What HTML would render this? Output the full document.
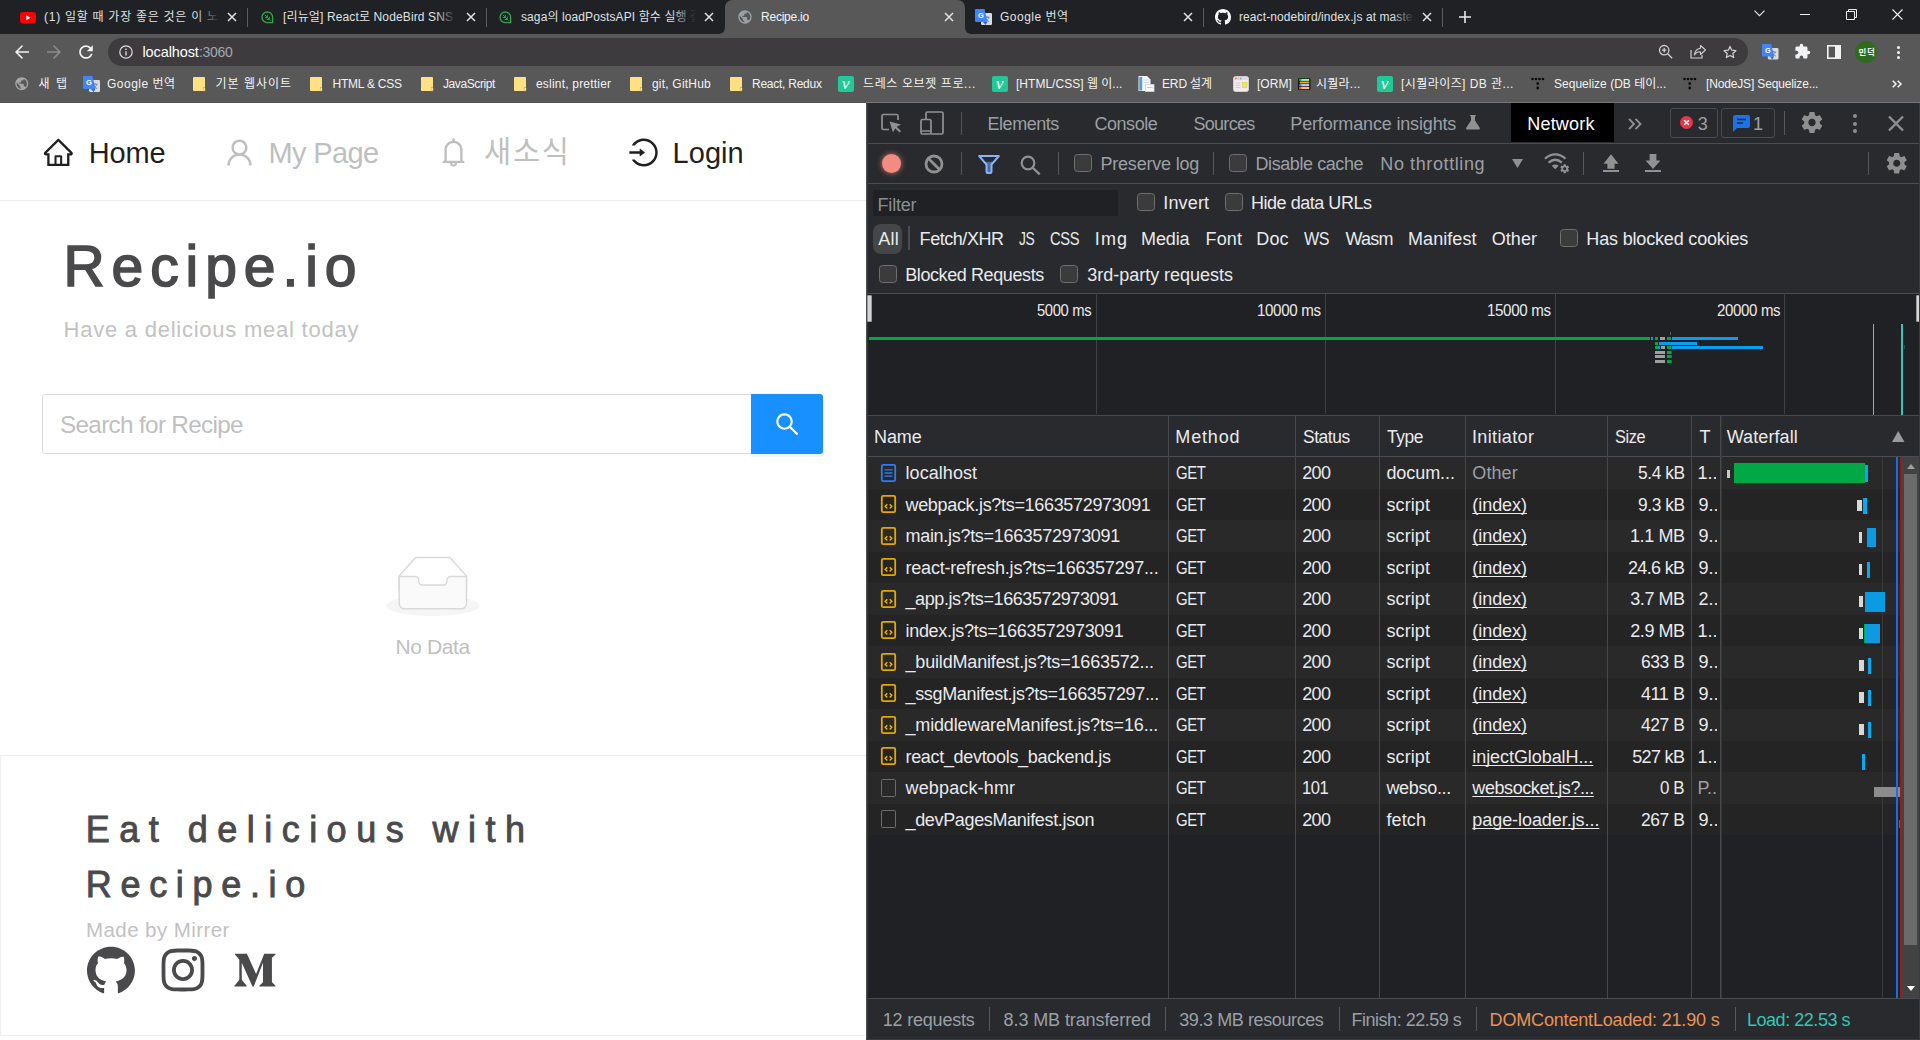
<!DOCTYPE html>
<html lang="ko">
<head>
<meta charset="utf-8">
<title>Recipe.io</title>
<style>
html,body{margin:0;padding:0;}
body{width:1920px;height:1040px;overflow:hidden;position:relative;background:#fff;font-family:"Liberation Sans","Noto Sans CJK KR",sans-serif;}
.a{position:absolute;box-sizing:border-box;}
.t{position:absolute;white-space:pre;margin:0;padding:0;font-weight:400;}
svg{display:block;overflow:visible;}
</style>
</head>
<body>
<header id="chrome">
<div class="a" style="left:0px;top:0px;width:1920px;height:34px;background:#202124;"></div>
<div class="a" style="left:0px;top:34px;width:1920px;height:68px;background:#585858;"></div>
<div class="a" style="left:0px;top:102px;width:866px;height:1px;background:#505050;"></div>
<div class="a" style="left:866px;top:102px;width:1054px;height:1px;background:#777577;"></div>
<svg class="a" style="left:717px;top:0" width="256" height="34" viewBox="0 0 256 34"><path d="M0 34 C6 34 8 32 8 26 L8 8 C8 3 11 0 16 0 L240 0 C245 0 248 3 248 8 L248 26 C248 32 250 34 256 34 Z" fill="#585858"/></svg>
<svg class="a" style="left:20px;top:11.5px" width="16" height="11.5" viewBox="0 0 16 11.5"><rect width="16" height="11.5" rx="3" fill="#f00"/><path d="M6.3 3.2L10.6 5.75L6.3 8.3Z" fill="#fff"/></svg>
<span class="t" style="top:8px;font-size:12px;line-height:18px;color:#dfe1e5;left:44px;letter-spacing:0.73px;">(1) 일할 때 가장 좋은 것은 이 노</span>
<div class="a" style="left:196px;top:4px;width:24px;height:26px;background:linear-gradient(to right,rgba(0,0,0,0),#202124);"></div>
<svg class="a" style="left:227px;top:12px" width="10" height="10" viewBox="0 0 10 10"><path d="M1 1L9 9 M9 1L1 9" stroke="#e3e3e3" stroke-width="1.5" fill="none"/></svg>
<div class="a" style="left:247px;top:8px;width:1px;height:19px;background:#5a5c60;"></div>
<svg class="a" style="left:260.5px;top:10.5px" width="13" height="13" viewBox="0 0 13 13"><path d="M6.300 1A5.300 5.300 0 106.300 11.600H11.600V6.300A5.300 5.300 0 006.300 1z" fill="none" stroke="#2fa24f" stroke-width="1.400"/><path d="M3.800 3.800L9.600 9.600M6.300 4v2.600H3.900M8.300 5.800v2.700H5.700" stroke="#2fa24f" stroke-width="1" fill="none"/></svg>
<span class="t" style="top:8px;font-size:12px;line-height:18px;color:#dfe1e5;left:283px;letter-spacing:0.13px;">[리뉴얼] React로 NodeBird SNS</span>
<div class="a" style="left:436px;top:4px;width:20px;height:26px;background:linear-gradient(to right,rgba(0,0,0,0),#202124);"></div>
<svg class="a" style="left:465.5px;top:12px" width="10" height="10" viewBox="0 0 10 10"><path d="M1 1L9 9 M9 1L1 9" stroke="#e3e3e3" stroke-width="1.5" fill="none"/></svg>
<div class="a" style="left:486px;top:8px;width:1px;height:19px;background:#5a5c60;"></div>
<svg class="a" style="left:498.5px;top:10.5px" width="13" height="13" viewBox="0 0 13 13"><path d="M6.300 1A5.300 5.300 0 106.300 11.600H11.600V6.300A5.300 5.300 0 006.300 1z" fill="none" stroke="#2fa24f" stroke-width="1.400"/><path d="M3.800 3.800L9.600 9.600M6.300 4v2.600H3.900M8.300 5.800v2.700H5.700" stroke="#2fa24f" stroke-width="1" fill="none"/></svg>
<span class="t" style="top:8px;font-size:12px;line-height:18px;color:#dfe1e5;left:521px;letter-spacing:0.1px;">saga의 loadPostsAPI 함수 실행 결</span>
<div class="a" style="left:672px;top:4px;width:24px;height:26px;background:linear-gradient(to right,rgba(0,0,0,0),#202124);"></div>
<div class="a" style="left:696px;top:4px;width:20px;height:26px;background:#202124;"></div>
<svg class="a" style="left:704px;top:12px" width="10" height="10" viewBox="0 0 10 10"><path d="M1 1L9 9 M9 1L1 9" stroke="#e3e3e3" stroke-width="1.5" fill="none"/></svg>
<svg class="a" style="left:737px;top:9px" width="16" height="16" viewBox="0 0 24 24"><path fill="#9aa0a6" d="M12 2C6.48 2 2 6.48 2 12s4.48 10 10 10 10-4.48 10-10S17.52 2 12 2zm-1 17.930c-3.950-.490-7-3.850-7-7.930 0-.620.080-1.210.210-1.790L9 15v1c0 1.100.9 2 2 2v1.930zm6.900-2.540c-.26-.810-1-1.390-1.900-1.390h-1v-3c0-.550-.450-1-1-1H8v-2h2c.550 0 1-.450 1-1V7h2c1.100 0 2-.9 2-2v-.410c2.930 1.190 5 4.060 5 7.410 0 2.080-.8 3.970-2.100 5.390z"/></svg>
<span class="t" style="top:8px;font-size:12px;line-height:18px;color:#f1f3f4;left:761px;letter-spacing:-0.23px;">Recipe.io</span>
<svg class="a" style="left:944px;top:12px" width="10" height="10" viewBox="0 0 10 10"><path d="M1 1L9 9 M9 1L1 9" stroke="#e3e3e3" stroke-width="1.5" fill="none"/></svg>
<svg class="a" style="left:975px;top:8.5px" width="17" height="17" viewBox="0 0 17 17"><rect x="6" y="4" width="11" height="12" rx="1.2" fill="#dadce0"/><path d="M9.500 8.200h5M12 7v1.200M10.200 12.500c2-1 3.200-2.500 3.600-4.300M10.600 9.500c.8 1.500 2 2.500 3.600 3" stroke="#5f7fb5" stroke-width=".9" fill="none"/><path d="M1.200 0h8.300L12.500 13H1.200C.5 13 0 12.500 0 11.800V1.200C0 .5.500 0 1.200 0z" fill="#4285f4"/><path d="M8 13l2.500 3 2-3z" fill="#3367d6"/><text x="3" y="9.300" font-family="Liberation Sans,sans-serif" font-size="7.500" font-weight="700" fill="#fff">G</text></svg>
<span class="t" style="top:8px;font-size:12px;line-height:18px;color:#dfe1e5;left:1000px;letter-spacing:0.49px;">Google 번역</span>
<svg class="a" style="left:1182.5px;top:12px" width="10" height="10" viewBox="0 0 10 10"><path d="M1 1L9 9 M9 1L1 9" stroke="#e3e3e3" stroke-width="1.5" fill="none"/></svg>
<div class="a" style="left:1203px;top:8px;width:1px;height:19px;background:#5a5c60;"></div>
<svg class="a" style="left:1214.500px;top:9px" width="16" height="16" viewBox="0 0 16 16"><path fill="#fff" d="M8 0C3.580 0 0 3.580 0 8c0 3.540 2.290 6.530 5.470 7.590.4.070.550-.170.550-.380 0-.190-.010-.820-.010-1.490-2.010.370-2.530-.490-2.690-.940-.090-.230-.480-.940-.820-1.130-.280-.150-.680-.520-.010-.530.630-.010 1.080.580 1.230.820.720 1.210 1.870.870 2.330.660.070-.520.280-.870.510-1.070-1.780-.2-3.640-.890-3.640-3.950 0-.870.310-1.590.820-2.150-.080-.2-.360-1.020.080-2.120 0 0 .670-.210 2.200.820.640-.180 1.320-.270 2-.270.680 0 1.360.090 2 .270 1.530-1.040 2.200-.820 2.200-.820.440 1.100.160 1.920.080 2.120.510.560.820 1.270.820 2.150 0 3.070-1.870 3.750-3.650 3.950.290.250.540.730.540 1.480 0 1.070-.010 1.930-.010 2.200 0 .210.150.460.550.380A8.013 8.013 0 0016 8c0-4.420-3.580-8-8-8z"/></svg>
<span class="t" style="top:8px;font-size:12px;line-height:18px;color:#dfe1e5;left:1239px;letter-spacing:0.09px;">react-nodebird/index.js at maste</span>
<div class="a" style="left:1392px;top:4px;width:22px;height:26px;background:linear-gradient(to right,rgba(0,0,0,0),#202124);"></div>
<svg class="a" style="left:1422px;top:12px" width="10" height="10" viewBox="0 0 10 10"><path d="M1 1L9 9 M9 1L1 9" stroke="#e3e3e3" stroke-width="1.5" fill="none"/></svg>
<div class="a" style="left:1442px;top:8px;width:1px;height:19px;background:#5a5c60;"></div>
<svg class="a" style="left:1459px;top:11px" width="12" height="12" viewBox="0 0 12 12"><path d="M6 0v12M0 6h12" stroke="#e8eaed" stroke-width="1.600"/></svg>
<svg class="a" style="left:1754px;top:10px" width="11" height="7" viewBox="0 0 11 7"><path d="M.5.700L5.500 5.700 10.500.700" stroke="#e8eaed" stroke-width="1.100" fill="none"/></svg>
<div class="a" style="left:1800px;top:14px;width:10px;height:1px;background:#f1f1f1;"></div>
<svg class="a" style="left:1846px;top:9px" width="11" height="11" viewBox="0 0 11 11"><path d="M.5 2.500h8v8h-8zM2.500 2.500v-2h8v8h-2" stroke="#f1f1f1" stroke-width="1" fill="none"/></svg>
<svg class="a" style="left:1892px;top:9px" width="11" height="11" viewBox="0 0 11 11"><path d="M.5.500l10 10M10.500.500l-10 10" stroke="#f1f1f1" stroke-width="1.100" fill="none"/></svg>
<svg class="a" style="left:14px;top:44px" width="16" height="16" viewBox="0 0 16 16"><path d="M15 7.200H3.900l5-5L8 1 1 8l7 7 .9-1.200-5-5H15z" fill="#f1f3f4"/></svg>
<svg class="a" style="left:46px;top:44px" width="16" height="16" viewBox="0 0 16 16"><path d="M1 7.200h11.100l-5-5L8 1l7 7-7 7-.9-1.200 5-5H1z" fill="#8b8b8b"/></svg>
<svg class="a" style="left:78px;top:44px" width="16" height="16" viewBox="0 0 16 16"><path d="M13.650 2.350A7.958 7.958 0 008 0C3.580 0 .01 3.580.01 8S3.580 16 8 16c3.730 0 6.840-2.550 7.730-6h-2.080A5.990 5.990 0 018 14c-3.310 0-6-2.690-6-6s2.690-6 6-6c1.660 0 3.140.690 4.220 1.780L9 7h7V0l-2.350 2.350z" fill="#f1f3f4" transform="translate(1.200 1.200) scale(.85)"/></svg>
<div class="a" style="left:108px;top:38px;width:1640px;height:28px;background:#3d3b3e;border-radius:14px;"></div>
<svg class="a" style="left:118.500px;top:45px" width="14" height="14" viewBox="0 0 14 14"><circle cx="7" cy="7" r="6.200" fill="none" stroke="#e0e0e0" stroke-width="1.200"/><path d="M7 6.200v4.200M7 3.600v1.400" stroke="#e0e0e0" stroke-width="1.300"/></svg>
<span class="t" style="top:42px;font-size:14.5px;line-height:20px;color:#ffffff;left:142.5px;letter-spacing:-0.11px;">localhost</span>
<span class="t" style="top:42px;font-size:14.5px;line-height:20px;color:#a3a9b0;left:198.83px;letter-spacing:-0.35px;transform:scaleX(0.9668);transform-origin:0 0;">:3060</span>
<svg class="a" style="left:1658px;top:44px" width="16" height="16" viewBox="0 0 16 16"><circle cx="6.200" cy="6.200" r="4.700" fill="none" stroke="#d0d0d0" stroke-width="1.300"/><path d="M9.700 9.700L14.200 14.200M4 6.200h4.400M6.200 4v4.400" stroke="#d0d0d0" stroke-width="1.300" fill="none"/></svg>
<svg class="a" style="left:1690px;top:44px" width="17" height="16" viewBox="0 0 17 16"><path d="M1 6v8h11v-3" stroke="#d0d0d0" stroke-width="1.200" fill="none"/><path d="M10.500 1.500L15.500 6l-5 4.500V7.800C7.500 7.800 5.500 9 4.300 11 4.800 7.500 6.800 4.800 10.500 4.200z" stroke="#d0d0d0" stroke-width="1.100" fill="none" stroke-linejoin="round"/></svg>
<svg class="a" style="left:1722px;top:44px" width="16" height="16" viewBox="0 0 24 24"><path d="M12 3.600l2.600 5.700 6.200.7-4.600 4.200 1.300 6.100L12 17.200 6.500 20.300l1.300-6.100L3.200 10l6.200-.7z" stroke="#d0d0d0" stroke-width="1.900" fill="none" stroke-linejoin="round"/></svg>
<svg class="a" style="left:1762px;top:44px" width="16.5" height="16.5" viewBox="0 0 17 17"><rect x="6" y="4" width="11" height="12" rx="1.2" fill="#dadce0"/><path d="M9.500 8.200h5M12 7v1.200M10.200 12.500c2-1 3.200-2.500 3.600-4.300M10.600 9.500c.8 1.500 2 2.500 3.600 3" stroke="#5f7fb5" stroke-width=".9" fill="none"/><path d="M1.200 0h8.300L12.500 13H1.200C.5 13 0 12.500 0 11.800V1.200C0 .5.500 0 1.200 0z" fill="#4285f4"/><path d="M8 13l2.500 3 2-3z" fill="#3367d6"/><text x="3" y="9.300" font-family="Liberation Sans,sans-serif" font-size="7.500" font-weight="700" fill="#fff">G</text></svg>
<svg class="a" style="left:1794px;top:43px" width="17" height="17" viewBox="0 0 24 24"><path fill="#f1f3f4" d="M20.500 11H19V7c0-1.100-.9-2-2-2h-4V3.500a2.500 2.500 0 00-5 0V5H4c-1.100 0-1.990.9-1.990 2v3.800H3.500c1.490 0 2.700 1.210 2.700 2.700s-1.210 2.700-2.700 2.700H2V20c0 1.100.9 2 2 2h3.800v-1.500c0-1.490 1.210-2.700 2.700-2.700 1.490 0 2.700 1.210 2.700 2.700V22H17c1.100 0 2-.9 2-2v-4h1.500a2.500 2.500 0 000-5z"/></svg>
<svg class="a" style="left:1827px;top:45px" width="14" height="14" viewBox="0 0 14 14"><rect x=".8" y=".8" width="12.400" height="12.400" fill="none" stroke="#f1f3f4" stroke-width="1.600"/><rect x="8" y="1" width="5.500" height="12" fill="#f1f3f4"/></svg>
<div class="a" style="left:1855px;top:41px;width:22px;height:22px;background:#2f6b1e;border-radius:50%;"></div>
<span class="t" style="top:45px;font-size:8.5px;line-height:14px;color:#eaf7e7;left:1858.5px;letter-spacing:0.68px;font-weight:700;">민덕</span>
<div class="a" style="left:1896.7px;top:45.95px;width:3.5px;height:3.5px;background:#f1f3f4;border-radius:50%;"></div>
<div class="a" style="left:1896.7px;top:50.75px;width:3.5px;height:3.5px;background:#f1f3f4;border-radius:50%;"></div>
<div class="a" style="left:1896.7px;top:55.55px;width:3.5px;height:3.5px;background:#f1f3f4;border-radius:50%;"></div>
<svg class="a" style="left:14px;top:76px" width="15.5" height="15.5" viewBox="0 0 24 24"><path fill="#a6a6a6" d="M12 2C6.48 2 2 6.48 2 12s4.48 10 10 10 10-4.48 10-10S17.52 2 12 2zm-1 17.930c-3.950-.490-7-3.850-7-7.930 0-.620.080-1.210.210-1.790L9 15v1c0 1.100.9 2 2 2v1.930zm6.900-2.540c-.26-.810-1-1.390-1.900-1.390h-1v-3c0-.550-.450-1-1-1H8v-2h2c.550 0 1-.450 1-1V7h2c1.100 0 2-.9 2-2v-.410c2.930 1.190 5 4.060 5 7.410 0 2.080-.8 3.970-2.100 5.390z"/></svg>
<span class="t" style="top:75px;font-size:12px;line-height:18px;color:#f1f3f4;left:38.5px;letter-spacing:1.56px;">새 탭</span>
<svg class="a" style="left:83px;top:75.5px" width="17" height="17" viewBox="0 0 17 17"><rect x="6" y="4" width="11" height="12" rx="1.2" fill="#dadce0"/><path d="M9.500 8.200h5M12 7v1.200M10.200 12.500c2-1 3.200-2.500 3.600-4.300M10.600 9.500c.8 1.500 2 2.500 3.600 3" stroke="#5f7fb5" stroke-width=".9" fill="none"/><path d="M1.200 0h8.300L12.500 13H1.200C.5 13 0 12.500 0 11.800V1.200C0 .5.500 0 1.200 0z" fill="#4285f4"/><path d="M8 13l2.500 3 2-3z" fill="#3367d6"/><text x="3" y="9.300" font-family="Liberation Sans,sans-serif" font-size="7.500" font-weight="700" fill="#fff">G</text></svg>
<span class="t" style="top:75px;font-size:12px;line-height:18px;color:#f1f3f4;left:107px;letter-spacing:0.49px;">Google 번역</span>
<svg class="a" style="left:193px;top:77px" width="12" height="14" viewBox="0 0 12 14"><path d="M1 0h10a1 1 0 011 1v9.500H10V14H1a1 1 0 01-1-1V1a1 1 0 011-1z" fill="#ffe082"/><path d="M10.200 10.800H12V13a1 1 0 01-1 1h-.8z" fill="#ffecb3" stroke="#f2c94c" stroke-width=".5"/></svg>
<span class="t" style="top:75px;font-size:12px;line-height:18px;color:#f1f3f4;left:215.5px;letter-spacing:0.99px;">기본 웹사이트</span>
<svg class="a" style="left:310px;top:77px" width="12" height="14" viewBox="0 0 12 14"><path d="M1 0h10a1 1 0 011 1v9.500H10V14H1a1 1 0 01-1-1V1a1 1 0 011-1z" fill="#ffe082"/><path d="M10.200 10.800H12V13a1 1 0 01-1 1h-.8z" fill="#ffecb3" stroke="#f2c94c" stroke-width=".5"/></svg>
<span class="t" style="top:75px;font-size:12px;line-height:18px;color:#f1f3f4;left:332.5px;letter-spacing:-0.22px;">HTML &amp; CSS</span>
<svg class="a" style="left:421px;top:77px" width="12" height="14" viewBox="0 0 12 14"><path d="M1 0h10a1 1 0 011 1v9.500H10V14H1a1 1 0 01-1-1V1a1 1 0 011-1z" fill="#ffe082"/><path d="M10.200 10.800H12V13a1 1 0 01-1 1h-.8z" fill="#ffecb3" stroke="#f2c94c" stroke-width=".5"/></svg>
<span class="t" style="top:75px;font-size:12px;line-height:18px;color:#f1f3f4;left:443px;letter-spacing:-0.41px;">JavaScript</span>
<svg class="a" style="left:513.5px;top:77px" width="12" height="14" viewBox="0 0 12 14"><path d="M1 0h10a1 1 0 011 1v9.500H10V14H1a1 1 0 01-1-1V1a1 1 0 011-1z" fill="#ffe082"/><path d="M10.200 10.800H12V13a1 1 0 01-1 1h-.8z" fill="#ffecb3" stroke="#f2c94c" stroke-width=".5"/></svg>
<span class="t" style="top:75px;font-size:12px;line-height:18px;color:#f1f3f4;left:536px;letter-spacing:0.2px;">eslint, prettier</span>
<svg class="a" style="left:629.5px;top:77px" width="12" height="14" viewBox="0 0 12 14"><path d="M1 0h10a1 1 0 011 1v9.500H10V14H1a1 1 0 01-1-1V1a1 1 0 011-1z" fill="#ffe082"/><path d="M10.200 10.800H12V13a1 1 0 01-1 1h-.8z" fill="#ffecb3" stroke="#f2c94c" stroke-width=".5"/></svg>
<span class="t" style="top:75px;font-size:12px;line-height:18px;color:#f1f3f4;left:652px;letter-spacing:0.2px;">git, GitHub</span>
<svg class="a" style="left:729.5px;top:77px" width="12" height="14" viewBox="0 0 12 14"><path d="M1 0h10a1 1 0 011 1v9.500H10V14H1a1 1 0 01-1-1V1a1 1 0 011-1z" fill="#ffe082"/><path d="M10.200 10.800H12V13a1 1 0 01-1 1h-.8z" fill="#ffecb3" stroke="#f2c94c" stroke-width=".5"/></svg>
<span class="t" style="top:75px;font-size:12px;line-height:18px;color:#f1f3f4;left:752px;letter-spacing:-0.25px;">React, Redux</span>
<svg class="a" style="left:838px;top:76px" width="16" height="16" viewBox="0 0 16 16"><rect width="16" height="16" rx="2" fill="#20c997"/><text x="7.600" y="13" text-anchor="middle" font-family="Liberation Serif,serif" font-style="italic" font-weight="400" font-size="17.500" fill="#fff">v</text></svg>
<span class="t" style="top:75px;font-size:12px;line-height:18px;color:#f1f3f4;left:863px;letter-spacing:0.61px;">드레스 오브젯 프로...</span>
<svg class="a" style="left:992px;top:76px" width="16" height="16" viewBox="0 0 16 16"><rect width="16" height="16" rx="2" fill="#20c997"/><text x="7.600" y="13" text-anchor="middle" font-family="Liberation Serif,serif" font-style="italic" font-weight="400" font-size="17.500" fill="#fff">v</text></svg>
<span class="t" style="top:75px;font-size:12px;line-height:18px;color:#f1f3f4;left:1016px;letter-spacing:0.02px;">[HTML/CSS] 웹 이...</span>
<svg class="a" style="left:1138px;top:76px" width="16" height="16" viewBox="0 0 16 16"><path d="M.5 0h8.500L12.500 3.500V15H.5z" fill="#f3f6fa"/><rect x="1.200" y="1" width="3" height="13.500" fill="#5b9bd5"/><path d="M5.500 4h5M5.500 6.500h5.500" stroke="#d5dbe3" stroke-width="1"/><rect x="7.500" y="8.500" width="8.500" height="7" fill="#f8f9fb" stroke="#cfd6df" stroke-width=".8"/><path d="M9 11.500h5.500" stroke="#c4ccd6" stroke-width="1"/></svg>
<span class="t" style="top:75px;font-size:12px;line-height:18px;color:#f1f3f4;left:1162px;letter-spacing:-0.14px;">ERD 설계</span>
<svg class="a" style="left:1233px;top:76px" width="16" height="16" viewBox="0 0 16 16"><rect x=".5" y=".5" width="15" height="15" rx="2" fill="#f3e9f1" stroke="#e2d3df" stroke-width=".8"/><rect x="1" y="1" width="14" height="3" fill="#e6d8e4"/><circle cx="2.800" cy="2.500" r=".9" fill="#f06aa8"/><circle cx="5.300" cy="2.500" r=".9" fill="#f2c94c"/><circle cx="7.800" cy="2.500" r=".9" fill="#56c2e6"/><path d="M2.500 7h5M2.500 9.300h5M2.500 11.600h5" stroke="#d9c8d6" stroke-width="1"/><rect x="9.500" y="6.500" width="4.500" height="5" fill="#efe85a" stroke="#d6cf47" stroke-width=".6"/></svg>
<span class="t" style="top:75px;font-size:12px;line-height:18px;color:#f1f3f4;left:1257px;letter-spacing:0.04px;">[ORM]</span>
<svg class="a" style="left:1297.500px;top:78px" width="12.500" height="12" viewBox="0 0 12.500 12"><rect x="0" y="0" width="12.500" height="12" rx="1.500" fill="#141414"/><rect x="1" y=".8" width="10.500" height="2.300" rx="1" fill="#2fb344"/><rect x="3.500" y="1.300" width="7.500" height="1.200" fill="#f4f4f4"/><rect x="1.500" y="3.600" width="10" height="2" rx="1" fill="#f2a51d"/><rect x="1" y="6" width="10.500" height="2.300" rx="1" fill="#3d8fe0"/><rect x="3.500" y="6.500" width="7.500" height="1.200" fill="#f4f4f4"/><rect x="1" y="8.800" width="10.500" height="2.500" rx="1" fill="#f0641e"/><rect x="3.500" y="9.400" width="7.500" height="1.200" fill="#f4f4f4"/></svg>
<span class="t" style="top:75px;font-size:12px;line-height:18px;color:#f1f3f4;left:1316px;letter-spacing:0.24px;">시퀄라...</span>
<svg class="a" style="left:1377px;top:76px" width="16" height="16" viewBox="0 0 16 16"><rect width="16" height="16" rx="2" fill="#20c997"/><text x="7.600" y="13" text-anchor="middle" font-family="Liberation Serif,serif" font-style="italic" font-weight="400" font-size="17.500" fill="#fff">v</text></svg>
<span class="t" style="top:75px;font-size:12px;line-height:18px;color:#f1f3f4;left:1401px;letter-spacing:0.43px;">[시퀄라이즈] DB 관...</span>
<svg class="a" style="left:1531px;top:77px" width="14" height="14" viewBox="0 0 14 14"><g fill="#0a0a0a"><circle cx="1.500" cy="2" r="1.300"/><circle cx="5" cy="2" r="1.300"/><circle cx="8.500" cy="2" r="1.300"/><circle cx="12" cy="2" r="1.300"/><circle cx="6.700" cy="6.500" r="1.400"/><circle cx="6.700" cy="11" r="1.400"/></g></svg>
<span class="t" style="top:75px;font-size:12px;line-height:18px;color:#f1f3f4;left:1554px;letter-spacing:0.01px;">Sequelize (DB 테이...</span>
<svg class="a" style="left:1683px;top:77px" width="14" height="14" viewBox="0 0 14 14"><g fill="#0a0a0a"><circle cx="1.500" cy="2" r="1.300"/><circle cx="5" cy="2" r="1.300"/><circle cx="8.500" cy="2" r="1.300"/><circle cx="12" cy="2" r="1.300"/><circle cx="6.700" cy="6.500" r="1.400"/><circle cx="6.700" cy="11" r="1.400"/></g></svg>
<span class="t" style="top:75px;font-size:12px;line-height:18px;color:#f1f3f4;left:1706px;letter-spacing:-0.15px;">[NodeJS] Sequelize...</span>
<svg class="a" style="left:1892px;top:80px" width="10" height="8" viewBox="0 0 10 8"><path d="M.7.700L4 4 .7 7.300M5.700.700L9 4 5.700 7.300" stroke="#f1f3f4" stroke-width="1.500" fill="none"/></svg>
</header>
<main id="page">
<div class="a" style="left:0px;top:103px;width:866px;height:937px;background:#fff;"></div>
<nav>
<svg class="a" style="left:44.1px;top:138px" width="28.7" height="28.7" viewBox="64 64 896 896"><path fill="#1f1f1f" d="M946.500 505L560.100 118.800l-25.900-25.900a31.500 31.500 0 00-44.400 0L77.500 505a63.900 63.900 0 00-18.800 46c.4 35.200 29.700 63.300 64.900 63.300h42.500V940h691.800V614.300h43.400c17.100 0 33.200-6.700 45.300-18.800a63.600 63.600 0 0018.700-45.300c0-17-6.700-33.100-18.800-45.200zM568 868H456V664h112v204zm217.900-325.700V868H632V640c0-22.100-17.900-40-40-40H432c-22.100 0-40 17.900-40 40v228H238.100V542.300h-96l370-369.700 23.100 23.100L882 542.300h-96.100z"/></svg>
<a class="t" style="top:135px;font-size:29px;line-height:36px;color:#1f1f1f;left:88.7px;letter-spacing:-0.18px;">Home</a>
<svg class="a" style="left:224.7px;top:138.2px" width="29" height="29" viewBox="64 64 896 896"><path fill="#bfbfbf" d="M858.500 763.600a374 374 0 00-80.600-119.500 375.630 375.630 0 00-119.500-80.600c-.4-.2-.8-.3-1.200-.5C719.500 518 760 444.700 760 362c0-137-111-248-248-248S264 225 264 362c0 82.700 40.500 156 102.800 201.100-.4.2-.8.3-1.200.5-44.800 18.900-85 46-119.500 80.600a375.630 375.630 0 00-80.600 119.500A371.700 371.700 0 00136 901.800a8 8 0 008 8.200h60c4.400 0 7.900-3.500 8-7.800 2-77.200 33-149.500 87.800-204.300 56.700-56.700 132-87.900 212.200-87.900s155.500 31.200 212.200 87.900C779 752.700 810 825 812 902.200c.1 4.400 3.600 7.800 8 7.800h60a8 8 0 008-8.200c-1-47.800-10.900-94.300-29.500-138.200zM512 534c-45.900 0-89.100-17.900-121.600-50.400S340 407.900 340 362c0-45.900 17.900-89.100 50.400-121.600S466.100 190 512 190s89.100 17.900 121.600 50.400S684 316.100 684 362c0 45.900-17.900 89.100-50.400 121.600S557.900 534 512 534z"/></svg>
<a class="t" style="top:135px;font-size:29px;line-height:36px;color:#bfbfbf;left:268.6px;letter-spacing:-0.65px;">My Page</a>
<svg class="a" style="left:438.9px;top:137.75px" width="29" height="29" viewBox="64 64 896 896"><path fill="#bfbfbf" d="M816 768h-24V428c0-141.100-104.300-257.700-240-277.100V112c0-22.100-17.900-40-40-40s-40 17.900-40 40v38.900c-135.700 19.400-240 136-240 277.100v340h-24c-17.700 0-32 14.300-32 32v32c0 4.400 3.600 8 8 8h216c0 61.800 50.200 112 112 112s112-50.200 112-112h216c4.400 0 8-3.600 8-8v-32c0-17.700-14.300-32-32-32zM512 888c-26.500 0-48-21.500-48-48h96c0 26.500-21.500 48-48 48zM304 768V428c0-55.600 21.600-107.800 60.900-147.100S456.400 220 512 220c55.600 0 107.800 21.600 147.100 60.900S720 372.400 720 428v340H304z"/></svg>
<a class="t" style="top:133px;font-size:29.5px;line-height:37px;color:#bfbfbf;left:484px;letter-spacing:1.76px;">새소식</a>
<svg class="a" style="left:628.7px;top:138.1px" width="29" height="29" viewBox="64 64 896 896"><path fill="#1f1f1f" d="M521.700 82c-152.500-.4-286.700 78.500-363.400 197.700-3.400 5.300.4 12.300 6.700 12.300h70.300c4.800 0 9.300-2.100 12.300-5.800 7-8.500 14.500-16.700 22.400-24.500 32.600-32.500 70.500-58.100 112.700-75.900 43.600-18.400 90-27.800 137.900-27.800 47.900 0 94.300 9.300 137.900 27.800 42.200 17.800 80.100 43.400 112.700 75.900 32.600 32.500 58.100 70.400 76 112.500C865.700 417.800 875 464.100 875 512c0 47.900-9.400 94.200-27.800 137.800-17.800 42.100-43.400 80-76 112.500s-70.500 58.100-112.700 75.900A352.800 352.800 0 01520.600 866c-47.900 0-94.300-9.400-137.900-27.800A353.840 353.840 0 01270 762.300c-7.900-7.900-15.300-16.100-22.400-24.500-3-3.700-7.600-5.800-12.300-5.800H165c-6.300 0-10.200 7-6.700 12.300C234.900 863.200 368.500 942 520.600 942c236.200 0 428-190.100 430.400-425.600C953.400 277.100 761.300 82.600 521.700 82zM395.020 624v-76h-314c-4.400 0-8-3.600-8-8v-56c0-4.400 3.600-8 8-8h314v-76c0-6.700 7.800-10.500 13-6.300l141.900 112a8 8 0 010 12.600l-141.900 112c-5.200 4.100-13 .4-13-6.300z"/></svg>
<a class="t" style="top:135px;font-size:29px;line-height:36px;color:#1f1f1f;left:672.6px;letter-spacing:0.02px;">Login</a>
</nav>
<div class="a" style="left:0px;top:200px;width:866px;height:1px;background:#f0f0f0;"></div>
<h1 class="t" style="top:232px;font-size:57px;line-height:68px;color:#4a4a4c;left:63.5px;letter-spacing:6.92px;-webkit-text-stroke:1.6px #4a4a4c;">Recipe.io</h1>
<p class="t" style="top:315px;font-size:22px;line-height:29px;color:#c2c2c2;left:63.5px;letter-spacing:0.76px;">Have a delicious meal today</p>
<div class="a" style="left:42px;top:394px;width:710px;height:60px;background:#fff;border:1px solid #d9d9d9;border-radius:3px 0 0 3px;"></div>
<span class="t" style="top:409px;font-size:24.3px;line-height:31px;color:#bfbfbf;left:60px;letter-spacing:-0.68px;">Search for Recipe</span>
<div class="a" style="left:751px;top:394px;width:72px;height:60px;background:#1890ff;border-radius:0 3px 3px 0;box-shadow:0 3px 0 rgba(0,0,0,.045);"></div>
<svg class="a" style="left:774.7px;top:411.7px" width="24.5" height="24.5" viewBox="64 64 896 896"><path fill="#fff" d="M909.600 854.500L649.900 594.800C690.200 542.700 712 479 712 412c0-80.200-31.300-155.400-87.900-212.100-56.600-56.700-132-87.900-212.100-87.900s-155.500 31.300-212.100 87.900C143.200 256.500 112 331.800 112 412c0 80.100 31.300 155.500 87.900 212.100C256.500 680.800 331.800 712 412 712c67 0 130.600-21.800 182.700-62l259.700 259.600a8.200 8.200 0 0011.600 0l43.600-43.500a8.200 8.200 0 000-11.600zM570.400 570.400C528 612.700 471.800 636 412 636s-116-23.300-158.400-65.600C211.300 528 188 471.800 188 412s23.300-116.100 65.600-158.400C296 211.300 352.200 188 412 188s116.100 23.200 158.400 65.600S636 352.200 636 412s-23.300 116.100-65.600 158.400z"/></svg>
<svg class="a" style="left:386.200px;top:556.200px" width="93.660" height="60" viewBox="0 0 64 41"><g transform="translate(0 1)" fill="none" fill-rule="evenodd"><ellipse fill="#f5f5f5" cx="32" cy="33" rx="32" ry="7"/><g fill-rule="nonzero" stroke="#d9d9d9"><path d="M55 12.760L44.854 1.258C44.367.474 43.656 0 42.907 0H21.093c-.749 0-1.460.474-1.947 1.257L9 12.761V22h46v-9.240z"/><path d="M41.613 15.931c0-1.605.994-2.930 2.227-2.931H55v18.137C55 33.260 53.680 35 52.050 35h-40.100C10.320 35 9 33.259 9 31.137V13h11.160c1.233 0 2.227 1.323 2.227 2.928v.022c0 1.605 1.005 2.901 2.237 2.901h14.752c1.232 0 2.237-1.308 2.237-2.913v-.007z" fill="#fafafa"/></g></g></svg>
<span class="t" style="top:633px;font-size:21px;line-height:27px;color:#bfbfbf;left:395.5px;letter-spacing:-0.39px;">No Data</span>
<footer>
<div class="a" style="left:0px;top:755px;width:866px;height:281px;border:1px solid #f0f0f0;border-right:none;"></div>
<h2 class="t" style="top:807px;font-size:36px;line-height:45px;color:#4a4a4c;left:85.75px;letter-spacing:9.48px;-webkit-text-stroke:0.9px #4a4a4c;">Eat delicious with</h2>
<h2 class="t" style="top:862px;font-size:36px;line-height:45px;color:#4a4a4c;left:85.75px;letter-spacing:8.68px;-webkit-text-stroke:0.9px #4a4a4c;">Recipe.io</h2>
<span class="t" style="top:916px;font-size:20.5px;line-height:27px;color:#c2c2c2;left:86px;letter-spacing:0.42px;">Made by Mirrer</span>
<svg class="a" style="left:87px;top:946.3px" width="48" height="48" viewBox="64 64 896 896"><path fill="#4a4a4c" d="M511.600 76.300C264.300 76.200 64 276.400 64 523.500 64 718.900 189.300 885 363.800 946c23.500 5.900 19.900-10.800 19.900-22.200v-77.500c-135.700 15.900-141.200-73.900-150.300-88.900C215 726 171.500 718 184.500 703c30.900-15.900 62.400 4 98.900 57.900 26.400 39.100 77.900 32.500 104 26 5.700-23.500 17.900-44.500 34.700-60.800-140.600-25.200-199.200-111-199.200-213 0-49.500 16.300-95 48.300-131.700-20.400-60.500 1.900-112.300 4.900-120 58.100-5.200 118.500 41.600 123.200 45.300 33-8.900 70.700-13.600 112.900-13.600 42.400 0 80.200 4.900 113.500 13.900 11.300-8.600 67.300-48.800 121.300-43.900 2.900 7.700 24.700 58.300 5.500 118 32.400 36.800 48.900 82.700 48.900 132.300 0 102.200-59 188.100-200 212.900a127.500 127.500 0 0138.100 91v112.500c.8 9 0 17.900 15 17.900 177.100-59.700 304.600-227 304.600-424.100 0-247.200-200.400-447.300-447.500-447.300z"/></svg>
<svg class="a" style="left:159px;top:946.3px" width="48" height="48" viewBox="64 64 896 896"><path fill="#4a4a4c" d="M512 306.900c-113.500 0-205.100 91.600-205.100 205.100S398.500 717.100 512 717.100 717.100 625.500 717.100 512 625.500 306.900 512 306.900zm0 338.400c-73.400 0-133.300-59.900-133.300-133.300S438.600 378.700 512 378.700 645.300 438.600 645.300 512 585.400 645.300 512 645.300zm213.500-394.600c-26.500 0-47.900 21.400-47.900 47.900s21.400 47.900 47.900 47.900 47.900-21.300 47.900-47.900a47.840 47.840 0 00-47.900-47.900zM911.800 512c0-55.200.5-109.900-2.600-165-3.100-64-17.700-120.800-64.500-167.600-46.900-46.900-103.600-61.400-167.600-64.500-55.200-3.100-109.900-2.600-165-2.600-55.200 0-109.900-.5-165 2.600-64 3.100-120.800 17.700-167.600 64.500C132.600 226.300 118.100 283 115 347c-3.100 55.200-2.600 109.900-2.600 165s-.5 109.900 2.600 165c3.100 64 17.700 120.800 64.500 167.600 46.900 46.900 103.600 61.400 167.600 64.500 55.200 3.100 109.900 2.600 165 2.600 55.200 0 109.900.5 165-2.600 64-3.100 120.800-17.700 167.600-64.500 46.900-46.900 61.400-103.600 64.500-167.600 3.200-55.100 2.600-109.800 2.600-165zm-88 235.800c-7.300 18.200-16.100 31.800-30.200 45.800-14.100 14.100-27.600 22.900-45.800 30.200C695.200 844.700 570.300 840 512 840c-58.300 0-183.300 4.700-235.900-16.100-18.200-7.300-31.800-16.100-45.800-30.200-14.100-14.100-22.900-27.600-30.200-45.800C179.300 695.200 184 570.300 184 512c0-58.300-4.700-183.300 16.100-235.900 7.300-18.200 16.100-31.800 30.200-45.800s27.600-22.900 45.800-30.200C328.700 179.300 453.700 184 512 184s183.300-4.700 235.900 16.100c18.200 7.300 31.800 16.100 45.800 30.200 14.100 14.100 22.900 27.600 30.200 45.800C844.700 328.700 840 453.700 840 512c0 58.300 4.700 183.200-16.200 235.800z"/></svg>
<svg class="a" style="left:231px;top:946.3px" width="48" height="48" viewBox="64 64 896 896"><path fill="#4a4a4c" d="M834.700 279.800l61.300-58.900V208H683.700L532.400 586.400 360.300 208H137.700v12.900l71.600 86.600c7 6.400 10.600 15.800 9.700 25.200V673c2.200 12.300-1.700 24.800-10.300 33.700L128 805v12.700h228.600v-12.900l-80.600-98a39.990 39.990 0 01-11.100-33.700V378.700l200.700 439.200h23.300l172.600-439.200v349.900c0 9.200 0 11.100-6 17.200l-62.100 60.300V819h301.200v-12.900l-59.900-58.900c-5.200-4-7.900-10.700-6.800-17.200V297a18.100 18.100 0 016.800-17.200z"/></svg>
</footer>
</main>
<aside id="devtools">
<div class="a" style="left:866px;top:103px;width:1054px;height:937px;background:#292a2d;"></div>
<div class="a" style="left:866px;top:103px;width:1px;height:937px;background:#4a4c50;"></div>
<div class="a" style="left:867px;top:103px;width:1px;height:937px;background:#36373b;"></div>
<div class="a" style="left:868px;top:143px;width:1052px;height:1px;background:#494c50;"></div>
<svg class="a" style="left:881px;top:113px" width="21" height="21" viewBox="0 0 21 21"><path d="M8 16.500H2.500a1.500 1.500 0 01-1.500-1.500V3a1.500 1.500 0 011.500-1.500h13A1.500 1.500 0 0117 3v4" stroke="#919191" stroke-width="1.700" fill="none"/><path d="M8.500 8.500l3.500 11 2.200-4.300 4.300 4.300 1.500-1.500-4.300-4.300 4.300-2.200z" fill="#919191"/></svg>
<svg class="a" style="left:920px;top:111px" width="24" height="24" viewBox="0 0 24 24"><path d="M6 9V2.500A1.500 1.500 0 017.500 1h14A1.500 1.500 0 0123 2.500v19a1.500 1.500 0 01-1.500 1.500H11" stroke="#919191" stroke-width="1.700" fill="none"/><rect x="1" y="8.500" width="10" height="14.500" rx="1.500" stroke="#919191" stroke-width="1.700" fill="none"/><path d="M1.500 20h9" stroke="#919191" stroke-width="1.500"/></svg>
<div class="a" style="left:960.5px;top:111.5px;width:1px;height:23px;background:#54575b;"></div>
<span class="t" style="top:112px;font-size:18px;line-height:24px;color:#9aa0a6;left:987.5px;letter-spacing:-0.46px;">Elements</span>
<span class="t" style="top:112px;font-size:18px;line-height:24px;color:#9aa0a6;left:1094.5px;letter-spacing:-0.47px;">Console</span>
<span class="t" style="top:112px;font-size:18px;line-height:24px;color:#9aa0a6;left:1193.5px;letter-spacing:-0.72px;">Sources</span>
<span class="t" style="top:112px;font-size:18px;line-height:24px;color:#9aa0a6;left:1290.3px;letter-spacing:-0.16px;">Performance insights</span>
<svg class="a" style="left:1465.500px;top:114.500px" width="14" height="14.500" viewBox="0 0 14 14.500"><path d="M4.200 0h5.600v1.300H9v4.200l4.700 7.200c.5.800 0 1.800-1 1.800H1.300c-1 0-1.500-1-1-1.800L5 5.500V1.300h-.8z" fill="#919191"/></svg>
<div class="a" style="left:1511px;top:103px;width:103px;height:39px;background:#000;"></div>
<span class="t" style="top:112px;font-size:18px;line-height:24px;color:#ffffff;left:1527.3px;letter-spacing:0.18px;">Network</span>
<svg class="a" style="left:1627.500px;top:117.500px" width="14" height="12" viewBox="0 0 14 12"><path d="M1 .8L6 6 1 11.200M7.500.8L12.500 6 7.500 11.200" stroke="#919191" stroke-width="1.900" fill="none"/></svg>
<div class="a" style="left:1670px;top:108px;width:48px;height:29.5px;border:1px solid #4a4c50;border-radius:3px;"></div>
<svg class="a" style="left:1680px;top:116px" width="13" height="13" viewBox="0 0 13 13"><circle cx="6.500" cy="6.500" r="6.500" fill="#e8364a"/><path d="M4.200 4.200l4.600 4.600M8.800 4.200L4.200 8.800" stroke="#fff" stroke-width="1.500"/></svg>
<span class="t" style="top:112px;font-size:18px;line-height:24px;color:#9aa0a6;left:1697.65px;">3</span>
<div class="a" style="left:1721px;top:108px;width:54px;height:29.5px;border:1px solid #4a4c50;border-radius:3px;"></div>
<svg class="a" style="left:1732.500px;top:114.500px" width="17" height="17" viewBox="0 0 17 17"><path d="M2 0h13a2 2 0 012 2v9a2 2 0 01-2 2H4l-4 4V2a2 2 0 012-2z" fill="#1a73e8"/><path d="M4 4.500h9M4 8h6" stroke="#292a2d" stroke-width="1.600"/></svg>
<span class="t" style="top:112px;font-size:18px;line-height:24px;color:#9aa0a6;left:1753.1px;">1</span>
<div class="a" style="left:1784px;top:111px;width:1px;height:23.5px;background:#54575b;"></div>
<svg class="a" style="left:1801px;top:112px" width="22" height="20.9524" viewBox="1.500 2 21 20"><path fill="#8f8f8f" d="M19.430 12.980c.040-.320.070-.640.070-.980s-.030-.660-.070-.980l2.110-1.650c.190-.150.240-.420.120-.640l-2-3.460c-.120-.220-.390-.3-.610-.220l-2.490 1c-.520-.4-1.080-.730-1.690-.980l-.380-2.650A.488.488 0 0014 2h-4c-.250 0-.460.180-.490.420l-.380 2.650c-.610.250-1.170.590-1.690.980l-2.490-1c-.230-.090-.490 0-.610.220l-2 3.460c-.130.220-.070.490.120.640l2.110 1.650c-.040.320-.070.650-.070.980s.030.660.070.980l-2.110 1.650c-.190.150-.240.420-.120.640l2 3.460c.120.220.390.300.610.220l2.490-1c.520.4 1.080.730 1.690.980l.380 2.650c.030.240.240.420.490.420h4c.250 0 .460-.180.490-.420l.380-2.650c.610-.250 1.170-.590 1.690-.980l2.490 1c.230.090.490 0 .610-.220l2-3.460c.120-.220.070-.490-.120-.640l-2.110-1.650zM12 15.500c-1.930 0-3.500-1.570-3.500-3.500s1.570-3.500 3.500-3.500 3.500 1.570 3.500 3.500-1.570 3.500-3.500 3.500z"/></svg>
<div class="a" style="left:1852.5px;top:114.3px;width:4.2px;height:4.2px;background:#8f8f8f;border-radius:50%;"></div>
<div class="a" style="left:1852.5px;top:121.7px;width:4.2px;height:4.2px;background:#8f8f8f;border-radius:50%;"></div>
<div class="a" style="left:1852.5px;top:129.1px;width:4.2px;height:4.2px;background:#8f8f8f;border-radius:50%;"></div>
<svg class="a" style="left:1888px;top:115.500px" width="16" height="15" viewBox="0 0 16 15"><path d="M1 .5l14 14M15 .5L1 14.500" stroke="#8f8f8f" stroke-width="2.400" fill="none"/></svg>
<div class="a" style="left:868px;top:183px;width:1052px;height:1px;background:#494c50;"></div>
<div class="a" style="left:881.5px;top:153.5px;width:19px;height:19px;background:#f28b82;border-radius:50%;box-shadow:0 0 5px 1px rgba(242,139,130,.55);"></div>
<svg class="a" style="left:924px;top:154px" width="20" height="20" viewBox="0 0 20 20"><circle cx="10" cy="10" r="8" stroke="#919191" stroke-width="2.800" fill="none"/><path d="M4.200 4.200l11.600 11.600" stroke="#919191" stroke-width="2.800"/></svg>
<div class="a" style="left:960.5px;top:151.5px;width:1px;height:23px;background:#54575b;"></div>
<svg class="a" style="left:978px;top:155px" width="22" height="19" viewBox="0 0 22 19"><path d="M1.200 1h19.600l-7.300 8.500v7.200c0 .7-.5 1.300-1.300 1.300H9.800c-.7 0-1.300-.5-1.300-1.300V9.500z" fill="#4a6da8" stroke="#8ab4f8" stroke-width="2" stroke-linejoin="round"/><path d="M3.500 2h15l-4 4.800h-7z" fill="#292a2d"/></svg>
<svg class="a" style="left:1020px;top:154.500px" width="21" height="20" viewBox="0 0 21 20"><circle cx="8" cy="8" r="6.300" stroke="#919191" stroke-width="2.200" fill="none"/><path d="M12.500 12.500l7.200 6.800" stroke="#919191" stroke-width="2.400"/></svg>
<div class="a" style="left:1057.5px;top:151.5px;width:1px;height:23px;background:#54575b;"></div>
<div class="a" style="left:1074px;top:154px;width:18px;height:18px;background:#3b3b3b;border:1.500px solid #6f6f6f;border-radius:3.500px;"></div>
<span class="t" style="top:152px;font-size:18px;line-height:24px;color:#9aa0a6;left:1100.4px;letter-spacing:-0.19px;">Preserve log</span>
<div class="a" style="left:1212.5px;top:151.5px;width:1px;height:23px;background:#54575b;"></div>
<div class="a" style="left:1229px;top:154px;width:18px;height:18px;background:#3b3b3b;border:1.500px solid #6f6f6f;border-radius:3.500px;"></div>
<span class="t" style="top:152px;font-size:18px;line-height:24px;color:#9aa0a6;left:1255.5px;letter-spacing:-0.42px;">Disable cache</span>
<span class="t" style="top:152px;font-size:18px;line-height:24px;color:#9aa0a6;left:1380.3px;letter-spacing:0.6px;">No throttling</span>
<svg class="a" style="left:1512px;top:159.400px" width="11" height="9" viewBox="0 0 11 9"><path d="M0 0h11L5.500 9z" fill="#919191"/></svg>
<svg class="a" style="left:1543.500px;top:153px" width="26" height="21" viewBox="0 0 26 21"><path d="M1 5.800C7 -.2 15.500 -.2 21.500 5.800M4.600 9.700C9 5.700 13.500 5.700 17.900 9.700" stroke="#919191" stroke-width="2.300" fill="none"/><path d="M7.800 12.700C9.800 11 12.700 11 14.700 12.700L11.250 16.300z" fill="#919191"/><g transform="translate(15.300 10.300) scale(.45)"><path fill="#919191" stroke="#292a2d" stroke-width="1.500" paint-order="stroke" d="M19.430 12.980c.040-.320.070-.640.070-.980s-.030-.660-.070-.980l2.110-1.650c.190-.150.240-.420.120-.640l-2-3.460c-.120-.220-.390-.3-.610-.220l-2.490 1c-.520-.4-1.080-.730-1.690-.980l-.380-2.650A.488.488 0 0014 2h-4c-.250 0-.460.180-.490.420l-.380 2.650c-.610.250-1.170.590-1.690.980l-2.490-1c-.230-.090-.490 0-.610.220l-2 3.460c-.130.220-.070.490.120.640l2.110 1.650c-.040.320-.070.650-.070.980s.030.660.070.980l-2.110 1.650c-.190.150-.240.420-.120.640l2 3.460c.120.220.390.300.610.220l2.490-1c.520.4 1.080.730 1.690.980l.380 2.650c.030.240.240.420.490.420h4c.250 0 .460-.180.490-.420l.380-2.650c.610-.250 1.170-.590 1.690-.980l2.490 1c.230.090.490 0 .610-.220l2-3.460c.120-.220.070-.490-.120-.640l-2.110-1.650zM12 15.500c-1.930 0-3.500-1.570-3.500-3.500s1.570-3.500 3.500-3.500 3.500 1.570 3.500 3.500-1.570 3.500-3.500 3.500z"/></g></svg>
<div class="a" style="left:1583px;top:151.5px;width:1px;height:23px;background:#54575b;"></div>
<svg class="a" style="left:1603px;top:154px" width="16" height="18" viewBox="0 0 16 18"><path d="M8 .2L15.500 9.700H11.600V14.700H4.400V9.700H.5zM0 16h16v2H0z" fill="#919191"/></svg>
<svg class="a" style="left:1645px;top:154px" width="16" height="18" viewBox="0 0 16 18"><path d="M4.600 0H11.400V6.600H15.400L8 15 .6 6.600H4.600zM0 16h16v2H0z" fill="#919191"/></svg>
<div class="a" style="left:1868px;top:151.5px;width:1px;height:23px;background:#54575b;"></div>
<svg class="a" style="left:1885.5px;top:153px" width="21.5" height="20.4762" viewBox="1.500 2 21 20"><path fill="#8f8f8f" d="M19.430 12.980c.040-.320.070-.640.070-.980s-.030-.660-.070-.980l2.110-1.650c.190-.150.240-.420.120-.640l-2-3.460c-.120-.220-.390-.3-.610-.220l-2.490 1c-.520-.4-1.080-.730-1.690-.980l-.380-2.650A.488.488 0 0014 2h-4c-.250 0-.460.180-.490.420l-.380 2.650c-.610.250-1.170.590-1.690.980l-2.490-1c-.230-.090-.490 0-.610.220l-2 3.460c-.130.220-.070.490.120.640l2.110 1.650c-.040.320-.070.650-.070.980s.030.660.070.980l-2.110 1.650c-.190.150-.240.420-.120.640l2 3.460c.120.220.390.300.610.220l2.490-1c.520.4 1.080.730 1.690.980l.380 2.650c.030.240.240.420.490.420h4c.250 0 .460-.180.490-.420l.380-2.650c.610-.250 1.170-.590 1.690-.980l2.490 1c.230.090.490 0 .610-.220l2-3.460c.120-.220.070-.490-.120-.640l-2.110-1.650zM12 15.500c-1.930 0-3.500-1.570-3.500-3.500s1.570-3.500 3.500-3.500 3.500 1.570 3.500 3.500-1.570 3.500-3.500 3.500z"/></svg>
<div class="a" style="left:868px;top:293px;width:1052px;height:1px;background:#494c50;"></div>
<div class="a" style="left:873px;top:189.5px;width:245px;height:26.5px;background:#202124;"></div>
<span class="t" style="top:193px;font-size:18px;line-height:24px;color:#8a8f96;left:877.5px;letter-spacing:-0.18px;">Filter</span>
<div class="a" style="left:1137px;top:193px;width:18px;height:18px;background:#3b3b3b;border:1.500px solid #6f6f6f;border-radius:3.500px;"></div>
<span class="t" style="top:191px;font-size:18px;line-height:24px;color:#e8eaed;left:1163.3px;letter-spacing:0.14px;">Invert</span>
<div class="a" style="left:1224.5px;top:193px;width:18px;height:18px;background:#3b3b3b;border:1.500px solid #6f6f6f;border-radius:3.500px;"></div>
<span class="t" style="top:191px;font-size:18px;line-height:24px;color:#e8eaed;left:1251px;letter-spacing:-0.47px;">Hide data URLs</span>
<div class="a" style="left:873px;top:223.5px;width:29px;height:30.5px;background:#454648;border-radius:8px;"></div>
<span class="t" style="top:227px;font-size:18px;line-height:24px;color:#e8eaed;left:878.3px;letter-spacing:0.2px;">All</span>
<div class="a" style="left:908px;top:226px;width:2px;height:23.5px;background:#4a4d52;"></div>
<span class="t" style="top:227px;font-size:18px;line-height:24px;color:#e8eaed;left:919.6px;letter-spacing:-0.45px;">Fetch/XHR</span>
<span class="t" style="top:227px;font-size:18px;line-height:24px;color:#e8eaed;left:1019px;letter-spacing:-0.43px;transform:scaleX(0.7681);transform-origin:0 0;">JS</span>
<span class="t" style="top:227px;font-size:18px;line-height:24px;color:#e8eaed;left:1050.4px;letter-spacing:-0.43px;transform:scaleX(0.8189);transform-origin:0 0;">CSS</span>
<span class="t" style="top:227px;font-size:18px;line-height:24px;color:#e8eaed;left:1094.8px;letter-spacing:1.1px;">Img</span>
<span class="t" style="top:227px;font-size:18px;line-height:24px;color:#e8eaed;left:1141px;letter-spacing:-0.1px;">Media</span>
<span class="t" style="top:227px;font-size:18px;line-height:24px;color:#e8eaed;left:1205.6px;letter-spacing:0.13px;">Font</span>
<span class="t" style="top:227px;font-size:18px;line-height:24px;color:#e8eaed;left:1256.3px;letter-spacing:0.1px;">Doc</span>
<span class="t" style="top:227px;font-size:18px;line-height:24px;color:#e8eaed;left:1303.7px;letter-spacing:-0.43px;transform:scaleX(0.8964);transform-origin:0 0;">WS</span>
<span class="t" style="top:227px;font-size:18px;line-height:24px;color:#e8eaed;left:1345.4px;letter-spacing:-0.71px;">Wasm</span>
<span class="t" style="top:227px;font-size:18px;line-height:24px;color:#e8eaed;left:1408px;letter-spacing:0.07px;">Manifest</span>
<span class="t" style="top:227px;font-size:18px;line-height:24px;color:#e8eaed;left:1491.7px;letter-spacing:0.07px;">Other</span>
<div class="a" style="left:1560px;top:229px;width:18px;height:18px;background:#3b3b3b;border:1.500px solid #6f6f6f;border-radius:3.500px;"></div>
<span class="t" style="top:227px;font-size:18px;line-height:24px;color:#e8eaed;left:1586.3px;letter-spacing:-0.17px;">Has blocked cookies</span>
<div class="a" style="left:879px;top:265px;width:18px;height:18px;background:#3b3b3b;border:1.500px solid #6f6f6f;border-radius:3.500px;"></div>
<span class="t" style="top:263px;font-size:18px;line-height:24px;color:#e8eaed;left:905.2px;letter-spacing:-0.4px;">Blocked Requests</span>
<div class="a" style="left:1059.8px;top:265px;width:18px;height:18px;background:#3b3b3b;border:1.500px solid #6f6f6f;border-radius:3.500px;"></div>
<span class="t" style="top:263px;font-size:18px;line-height:24px;color:#e8eaed;left:1087.3px;letter-spacing:-0.02px;">3rd-party requests</span>
<div class="a" style="left:868px;top:294px;width:1052px;height:120.5px;background:#202124;"></div>
<div class="a" style="left:868px;top:414.5px;width:1052px;height:1.5px;background:#46484c;"></div>
<div class="a" style="left:1095.5px;top:294px;width:1px;height:120px;background:#3f4044;"></div>
<div class="a" style="left:1325px;top:294px;width:1px;height:120px;background:#3f4044;"></div>
<div class="a" style="left:1554.5px;top:294px;width:1px;height:120px;background:#3f4044;"></div>
<div class="a" style="left:1784px;top:294px;width:1px;height:120px;background:#3f4044;"></div>
<div class="a" style="left:867px;top:294.5px;width:4.5px;height:27.5px;background:#d5d5d5;border-radius:1px;border:1px solid #9a9a9a;"></div>
<div class="a" style="left:1916px;top:294.5px;width:4.5px;height:27.5px;background:#d5d5d5;border-radius:1px;border:1px solid #9a9a9a;"></div>
<span class="t" style="top:300px;font-size:16px;line-height:21px;color:#e8eaed;left:1037px;letter-spacing:-0.38px;transform:scaleX(0.9241);transform-origin:0 0;">5000 ms</span>
<span class="t" style="top:300px;font-size:16px;line-height:21px;color:#e8eaed;left:1257.05px;letter-spacing:-0.38px;transform:scaleX(0.9459);transform-origin:0 0;">10000 ms</span>
<span class="t" style="top:300px;font-size:16px;line-height:21px;color:#e8eaed;left:1486.55px;letter-spacing:-0.38px;transform:scaleX(0.9459);transform-origin:0 0;">15000 ms</span>
<span class="t" style="top:300px;font-size:16px;line-height:21px;color:#e8eaed;left:1717px;letter-spacing:-0.38px;transform:scaleX(0.9408);transform-origin:0 0;">20000 ms</span>
<div class="a" style="left:868.5px;top:337px;width:781.5px;height:3px;background:#00a846;"></div>
<div class="a" style="left:1651px;top:337px;width:2px;height:3px;background:#0a9cf0;"></div>
<div class="a" style="left:1655px;top:337px;width:2.5px;height:3px;background:#00a846;"></div>
<div class="a" style="left:1660px;top:337px;width:5px;height:3px;background:#9e9e9e;"></div>
<div class="a" style="left:1666.5px;top:337px;width:4px;height:3px;background:#00a846;"></div>
<div class="a" style="left:1672px;top:337px;width:66px;height:3px;background:#0a9cf0;"></div>
<div class="a" style="left:1655px;top:341.5px;width:2.5px;height:3px;background:#00a846;"></div>
<div class="a" style="left:1659px;top:341.5px;width:37.5px;height:3px;background:#0a9cf0;"></div>
<div class="a" style="left:1655px;top:346px;width:2.5px;height:3px;background:#00a846;"></div>
<div class="a" style="left:1658px;top:346px;width:1.5px;height:3px;background:#0a9cf0;"></div>
<div class="a" style="left:1661px;top:346px;width:4px;height:3px;background:#9e9e9e;"></div>
<div class="a" style="left:1666.5px;top:346px;width:4px;height:3px;background:#00a846;"></div>
<div class="a" style="left:1671.5px;top:346px;width:91px;height:3px;background:#0a9cf0;"></div>
<div class="a" style="left:1655px;top:350.5px;width:10px;height:3px;background:#9e9e9e;"></div>
<div class="a" style="left:1666.5px;top:350.5px;width:4px;height:3px;background:#00a846;"></div>
<div class="a" style="left:1671px;top:350.5px;width:1px;height:3px;background:#1f5f8a;"></div>
<div class="a" style="left:1655px;top:355px;width:10px;height:3px;background:#9e9e9e;"></div>
<div class="a" style="left:1666.5px;top:355px;width:4px;height:3px;background:#00a846;"></div>
<div class="a" style="left:1671px;top:355px;width:1px;height:3px;background:#1f5f8a;"></div>
<div class="a" style="left:1655px;top:359.5px;width:10px;height:3px;background:#9e9e9e;"></div>
<div class="a" style="left:1666.5px;top:359.5px;width:4px;height:3px;background:#00a846;"></div>
<div class="a" style="left:1671px;top:359.5px;width:1px;height:3px;background:#1f5f8a;"></div>
<div class="a" style="left:1670px;top:332px;width:1px;height:3px;background:#55585c;"></div>
<div class="a" style="left:1872.5px;top:324px;width:1.5px;height:90.5px;background:#e8925a;"></div>
<div class="a" style="left:1901px;top:324px;width:1.5px;height:90.5px;background:#35c4b5;"></div>
<div class="a" style="left:1904px;top:345px;width:1px;height:4px;background:#2a4a5a;"></div>
<div class="a" style="left:868px;top:456px;width:1052px;height:1px;background:#494c50;"></div>
<span class="t" style="top:425px;font-size:18px;line-height:24px;color:#e8eaed;left:874px;letter-spacing:-0.07px;">Name</span>
<span class="t" style="top:425px;font-size:18px;line-height:24px;color:#e8eaed;left:1175.3px;letter-spacing:0.85px;">Method</span>
<span class="t" style="top:425px;font-size:18px;line-height:24px;color:#e8eaed;left:1302.5px;letter-spacing:-0.43px;transform:scaleX(0.9656);transform-origin:0 0;">Status</span>
<span class="t" style="top:425px;font-size:18px;line-height:24px;color:#e8eaed;left:1387px;letter-spacing:-0.43px;transform:scaleX(0.9676);transform-origin:0 0;">Type</span>
<span class="t" style="top:425px;font-size:18px;line-height:24px;color:#e8eaed;left:1472px;letter-spacing:0.37px;">Initiator</span>
<span class="t" style="top:425px;font-size:18px;line-height:24px;color:#e8eaed;left:1614.6px;letter-spacing:-0.43px;transform:scaleX(0.9106);transform-origin:0 0;">Size</span>
<span class="t" style="top:425px;font-size:18px;line-height:24px;color:#e8eaed;left:1699.4px;">T</span>
<span class="t" style="top:425px;font-size:18px;line-height:24px;color:#e8eaed;left:1726.7px;letter-spacing:0.09px;">Waterfall</span>
<svg class="a" style="left:1892px;top:430.500px" width="12.500" height="11" viewBox="0 0 12.500 11"><path d="M6.250 0l6.250 11H0z" fill="#9a9a9a"/></svg>
<div class="a" style="left:868px;top:835px;width:1052px;height:163px;background:#202124;"></div>
<div class="a" style="left:868px;top:457px;width:1034px;height:31.5px;background:#292929;"></div>
<div class="a" style="left:868px;top:488.5px;width:1034px;height:31.5px;background:#242424;"></div>
<div class="a" style="left:868px;top:520px;width:1034px;height:31.5px;background:#292929;"></div>
<div class="a" style="left:868px;top:551.5px;width:1034px;height:31.5px;background:#242424;"></div>
<div class="a" style="left:868px;top:583px;width:1034px;height:31.5px;background:#292929;"></div>
<div class="a" style="left:868px;top:614.5px;width:1034px;height:31.5px;background:#242424;"></div>
<div class="a" style="left:868px;top:646px;width:1034px;height:31.5px;background:#292929;"></div>
<div class="a" style="left:868px;top:677.5px;width:1034px;height:31.5px;background:#242424;"></div>
<div class="a" style="left:868px;top:709px;width:1034px;height:31.5px;background:#292929;"></div>
<div class="a" style="left:868px;top:740.5px;width:1034px;height:31.5px;background:#242424;"></div>
<div class="a" style="left:868px;top:772px;width:1034px;height:31.5px;background:#292929;"></div>
<div class="a" style="left:868px;top:803.5px;width:1034px;height:31.5px;background:#242424;"></div>
<svg class="a" style="left:881px;top:463.5px" width="15" height="18" viewBox="0 0 15 18"><rect x=".8" y=".8" width="13.400" height="16.400" rx="1.500" fill="none" stroke="#2b7cf5" stroke-width="1.800"/><path d="M3.500 5.800h8M3.500 9h8M3.500 12.200h8" stroke="#2b7cf5" stroke-width="1.300"/></svg>
<span class="t" style="top:461px;font-size:18px;line-height:24px;color:#e8eaed;left:905.5px;letter-spacing:0.06px;">localhost</span>
<span class="t" style="top:461px;font-size:18px;line-height:24px;color:#e8eaed;left:1175.5px;letter-spacing:-0.43px;transform:scaleX(0.8299);transform-origin:0 0;">GET</span>
<span class="t" style="top:461px;font-size:18px;line-height:24px;color:#e8eaed;left:1302.2px;letter-spacing:-0.61px;">200</span>
<span class="t" style="top:461px;font-size:18px;line-height:24px;color:#e8eaed;left:1386.4px;letter-spacing:-0.06px;">docum...</span>
<span class="t" style="top:461px;font-size:18px;line-height:24px;color:#9aa0a6;left:1472.3px;letter-spacing:0.09px;">Other</span>
<span class="t" style="top:461px;font-size:18px;line-height:24px;color:#e8eaed;left:1637.9px;letter-spacing:-0.43px;transform:scaleX(0.9637);transform-origin:0 0;">5.4 kB</span>
<span class="t" style="top:461px;font-size:18px;line-height:24px;color:#e8eaed;left:1697.4px;width:19px;overflow:hidden;">1...</span>
<svg class="a" style="left:881px;top:495px" width="15" height="18" viewBox="0 0 15 18"><rect x=".8" y=".8" width="13.400" height="16.400" rx="1.500" fill="none" stroke="#e8a600" stroke-width="1.800"/><path d="M6.300 9.200L4.200 11.300l2.100 2.100M8.700 9.200l2.100 2.100-2.100 2.100" stroke="#f0b400" stroke-width="1.400" fill="none"/></svg>
<span class="t" style="top:493px;font-size:18px;line-height:24px;color:#e8eaed;left:905.5px;letter-spacing:-0.32px;">webpack.js?ts=1663572973091</span>
<span class="t" style="top:493px;font-size:18px;line-height:24px;color:#e8eaed;left:1175.5px;letter-spacing:-0.43px;transform:scaleX(0.8299);transform-origin:0 0;">GET</span>
<span class="t" style="top:493px;font-size:18px;line-height:24px;color:#e8eaed;left:1302.2px;letter-spacing:-0.61px;">200</span>
<span class="t" style="top:493px;font-size:18px;line-height:24px;color:#e8eaed;left:1386.4px;letter-spacing:0.12px;">script</span>
<span class="t" style="top:493px;font-size:18px;line-height:24px;color:#e8eaed;left:1472.3px;letter-spacing:-0.05px;text-decoration:underline;text-decoration-thickness:1px;text-underline-offset:2px;text-decoration-skip-ink:none;">(index)</span>
<span class="t" style="top:493px;font-size:18px;line-height:24px;color:#e8eaed;left:1637.9px;letter-spacing:-0.43px;transform:scaleX(0.9637);transform-origin:0 0;">9.3 kB</span>
<span class="t" style="top:493px;font-size:18px;line-height:24px;color:#e8eaed;left:1698.4px;width:19px;overflow:hidden;">9...</span>
<svg class="a" style="left:881px;top:526.5px" width="15" height="18" viewBox="0 0 15 18"><rect x=".8" y=".8" width="13.400" height="16.400" rx="1.500" fill="none" stroke="#e8a600" stroke-width="1.800"/><path d="M6.300 9.200L4.200 11.300l2.100 2.100M8.700 9.200l2.100 2.100-2.100 2.100" stroke="#f0b400" stroke-width="1.400" fill="none"/></svg>
<span class="t" style="top:524px;font-size:18px;line-height:24px;color:#e8eaed;left:905.5px;letter-spacing:-0.3px;">main.js?ts=1663572973091</span>
<span class="t" style="top:524px;font-size:18px;line-height:24px;color:#e8eaed;left:1175.5px;letter-spacing:-0.43px;transform:scaleX(0.8299);transform-origin:0 0;">GET</span>
<span class="t" style="top:524px;font-size:18px;line-height:24px;color:#e8eaed;left:1302.2px;letter-spacing:-0.61px;">200</span>
<span class="t" style="top:524px;font-size:18px;line-height:24px;color:#e8eaed;left:1386.4px;letter-spacing:0.12px;">script</span>
<span class="t" style="top:524px;font-size:18px;line-height:24px;color:#e8eaed;left:1472.3px;letter-spacing:-0.05px;text-decoration:underline;text-decoration-thickness:1px;text-underline-offset:2px;text-decoration-skip-ink:none;">(index)</span>
<span class="t" style="top:524px;font-size:18px;line-height:24px;color:#e8eaed;left:1630px;letter-spacing:-0.4px;">1.1 MB</span>
<span class="t" style="top:524px;font-size:18px;line-height:24px;color:#e8eaed;left:1698.4px;width:19px;overflow:hidden;">9...</span>
<svg class="a" style="left:881px;top:558px" width="15" height="18" viewBox="0 0 15 18"><rect x=".8" y=".8" width="13.400" height="16.400" rx="1.500" fill="none" stroke="#e8a600" stroke-width="1.800"/><path d="M6.300 9.200L4.200 11.300l2.100 2.100M8.700 9.200l2.100 2.100-2.100 2.100" stroke="#f0b400" stroke-width="1.400" fill="none"/></svg>
<span class="t" style="top:556px;font-size:18px;line-height:24px;color:#e8eaed;left:905.5px;letter-spacing:-0.21px;">react-refresh.js?ts=166357297...</span>
<span class="t" style="top:556px;font-size:18px;line-height:24px;color:#e8eaed;left:1175.5px;letter-spacing:-0.43px;transform:scaleX(0.8299);transform-origin:0 0;">GET</span>
<span class="t" style="top:556px;font-size:18px;line-height:24px;color:#e8eaed;left:1302.2px;letter-spacing:-0.61px;">200</span>
<span class="t" style="top:556px;font-size:18px;line-height:24px;color:#e8eaed;left:1386.4px;letter-spacing:0.12px;">script</span>
<span class="t" style="top:556px;font-size:18px;line-height:24px;color:#e8eaed;left:1472.3px;letter-spacing:-0.05px;text-decoration:underline;text-decoration-thickness:1px;text-underline-offset:2px;text-decoration-skip-ink:none;">(index)</span>
<span class="t" style="top:556px;font-size:18px;line-height:24px;color:#e8eaed;left:1628px;letter-spacing:-0.67px;">24.6 kB</span>
<span class="t" style="top:556px;font-size:18px;line-height:24px;color:#e8eaed;left:1698.4px;width:19px;overflow:hidden;">9...</span>
<svg class="a" style="left:881px;top:589.5px" width="15" height="18" viewBox="0 0 15 18"><rect x=".8" y=".8" width="13.400" height="16.400" rx="1.500" fill="none" stroke="#e8a600" stroke-width="1.800"/><path d="M6.300 9.200L4.200 11.300l2.100 2.100M8.700 9.200l2.100 2.100-2.100 2.100" stroke="#f0b400" stroke-width="1.400" fill="none"/></svg>
<span class="t" style="top:587px;font-size:18px;line-height:24px;color:#e8eaed;left:905.5px;letter-spacing:-0.41px;">_app.js?ts=1663572973091</span>
<span class="t" style="top:587px;font-size:18px;line-height:24px;color:#e8eaed;left:1175.5px;letter-spacing:-0.43px;transform:scaleX(0.8299);transform-origin:0 0;">GET</span>
<span class="t" style="top:587px;font-size:18px;line-height:24px;color:#e8eaed;left:1302.2px;letter-spacing:-0.61px;">200</span>
<span class="t" style="top:587px;font-size:18px;line-height:24px;color:#e8eaed;left:1386.4px;letter-spacing:0.12px;">script</span>
<span class="t" style="top:587px;font-size:18px;line-height:24px;color:#e8eaed;left:1472.3px;letter-spacing:-0.05px;text-decoration:underline;text-decoration-thickness:1px;text-underline-offset:2px;text-decoration-skip-ink:none;">(index)</span>
<span class="t" style="top:587px;font-size:18px;line-height:24px;color:#e8eaed;left:1630.3px;letter-spacing:-0.46px;">3.7 MB</span>
<span class="t" style="top:587px;font-size:18px;line-height:24px;color:#e8eaed;left:1698.4px;width:19px;overflow:hidden;">2...</span>
<svg class="a" style="left:881px;top:621px" width="15" height="18" viewBox="0 0 15 18"><rect x=".8" y=".8" width="13.400" height="16.400" rx="1.500" fill="none" stroke="#e8a600" stroke-width="1.800"/><path d="M6.300 9.200L4.200 11.300l2.100 2.100M8.700 9.200l2.100 2.100-2.100 2.100" stroke="#f0b400" stroke-width="1.400" fill="none"/></svg>
<span class="t" style="top:619px;font-size:18px;line-height:24px;color:#e8eaed;left:905.5px;letter-spacing:-0.31px;">index.js?ts=1663572973091</span>
<span class="t" style="top:619px;font-size:18px;line-height:24px;color:#e8eaed;left:1175.5px;letter-spacing:-0.43px;transform:scaleX(0.8299);transform-origin:0 0;">GET</span>
<span class="t" style="top:619px;font-size:18px;line-height:24px;color:#e8eaed;left:1302.2px;letter-spacing:-0.61px;">200</span>
<span class="t" style="top:619px;font-size:18px;line-height:24px;color:#e8eaed;left:1386.4px;letter-spacing:0.12px;">script</span>
<span class="t" style="top:619px;font-size:18px;line-height:24px;color:#e8eaed;left:1472.3px;letter-spacing:-0.05px;text-decoration:underline;text-decoration-thickness:1px;text-underline-offset:2px;text-decoration-skip-ink:none;">(index)</span>
<span class="t" style="top:619px;font-size:18px;line-height:24px;color:#e8eaed;left:1630.3px;letter-spacing:-0.46px;">2.9 MB</span>
<span class="t" style="top:619px;font-size:18px;line-height:24px;color:#e8eaed;left:1697.4px;width:19px;overflow:hidden;">1...</span>
<svg class="a" style="left:881px;top:652.5px" width="15" height="18" viewBox="0 0 15 18"><rect x=".8" y=".8" width="13.400" height="16.400" rx="1.500" fill="none" stroke="#e8a600" stroke-width="1.800"/><path d="M6.300 9.200L4.200 11.300l2.100 2.100M8.700 9.200l2.100 2.100-2.100 2.100" stroke="#f0b400" stroke-width="1.400" fill="none"/></svg>
<span class="t" style="top:650px;font-size:18px;line-height:24px;color:#e8eaed;left:905.5px;letter-spacing:-0.17px;">_buildManifest.js?ts=1663572...</span>
<span class="t" style="top:650px;font-size:18px;line-height:24px;color:#e8eaed;left:1175.5px;letter-spacing:-0.43px;transform:scaleX(0.8299);transform-origin:0 0;">GET</span>
<span class="t" style="top:650px;font-size:18px;line-height:24px;color:#e8eaed;left:1302.2px;letter-spacing:-0.61px;">200</span>
<span class="t" style="top:650px;font-size:18px;line-height:24px;color:#e8eaed;left:1386.4px;letter-spacing:0.12px;">script</span>
<span class="t" style="top:650px;font-size:18px;line-height:24px;color:#e8eaed;left:1472.3px;letter-spacing:-0.05px;text-decoration:underline;text-decoration-thickness:1px;text-underline-offset:2px;text-decoration-skip-ink:none;">(index)</span>
<span class="t" style="top:650px;font-size:18px;line-height:24px;color:#e8eaed;left:1641px;letter-spacing:-0.43px;transform:scaleX(0.971);transform-origin:0 0;">633 B</span>
<span class="t" style="top:650px;font-size:18px;line-height:24px;color:#e8eaed;left:1698.4px;width:19px;overflow:hidden;">9...</span>
<svg class="a" style="left:881px;top:684px" width="15" height="18" viewBox="0 0 15 18"><rect x=".8" y=".8" width="13.400" height="16.400" rx="1.500" fill="none" stroke="#e8a600" stroke-width="1.800"/><path d="M6.300 9.200L4.200 11.300l2.100 2.100M8.700 9.200l2.100 2.100-2.100 2.100" stroke="#f0b400" stroke-width="1.400" fill="none"/></svg>
<span class="t" style="top:682px;font-size:18px;line-height:24px;color:#e8eaed;left:905.5px;letter-spacing:-0.33px;">_ssgManifest.js?ts=166357297...</span>
<span class="t" style="top:682px;font-size:18px;line-height:24px;color:#e8eaed;left:1175.5px;letter-spacing:-0.43px;transform:scaleX(0.8299);transform-origin:0 0;">GET</span>
<span class="t" style="top:682px;font-size:18px;line-height:24px;color:#e8eaed;left:1302.2px;letter-spacing:-0.61px;">200</span>
<span class="t" style="top:682px;font-size:18px;line-height:24px;color:#e8eaed;left:1386.4px;letter-spacing:0.12px;">script</span>
<span class="t" style="top:682px;font-size:18px;line-height:24px;color:#e8eaed;left:1472.3px;letter-spacing:-0.05px;text-decoration:underline;text-decoration-thickness:1px;text-underline-offset:2px;text-decoration-skip-ink:none;">(index)</span>
<span class="t" style="top:682px;font-size:18px;line-height:24px;color:#e8eaed;left:1641px;letter-spacing:-0.42px;">411 B</span>
<span class="t" style="top:682px;font-size:18px;line-height:24px;color:#e8eaed;left:1698.4px;width:19px;overflow:hidden;">9...</span>
<svg class="a" style="left:881px;top:715.5px" width="15" height="18" viewBox="0 0 15 18"><rect x=".8" y=".8" width="13.400" height="16.400" rx="1.500" fill="none" stroke="#e8a600" stroke-width="1.800"/><path d="M6.300 9.200L4.200 11.300l2.100 2.100M8.700 9.200l2.100 2.100-2.100 2.100" stroke="#f0b400" stroke-width="1.400" fill="none"/></svg>
<span class="t" style="top:713px;font-size:18px;line-height:24px;color:#e8eaed;left:905.5px;letter-spacing:-0.16px;">_middlewareManifest.js?ts=16...</span>
<span class="t" style="top:713px;font-size:18px;line-height:24px;color:#e8eaed;left:1175.5px;letter-spacing:-0.43px;transform:scaleX(0.8299);transform-origin:0 0;">GET</span>
<span class="t" style="top:713px;font-size:18px;line-height:24px;color:#e8eaed;left:1302.2px;letter-spacing:-0.61px;">200</span>
<span class="t" style="top:713px;font-size:18px;line-height:24px;color:#e8eaed;left:1386.4px;letter-spacing:0.12px;">script</span>
<span class="t" style="top:713px;font-size:18px;line-height:24px;color:#e8eaed;left:1472.3px;letter-spacing:-0.05px;text-decoration:underline;text-decoration-thickness:1px;text-underline-offset:2px;text-decoration-skip-ink:none;">(index)</span>
<span class="t" style="top:713px;font-size:18px;line-height:24px;color:#e8eaed;left:1641px;letter-spacing:-0.43px;transform:scaleX(0.971);transform-origin:0 0;">427 B</span>
<span class="t" style="top:713px;font-size:18px;line-height:24px;color:#e8eaed;left:1698.4px;width:19px;overflow:hidden;">9...</span>
<svg class="a" style="left:881px;top:747px" width="15" height="18" viewBox="0 0 15 18"><rect x=".8" y=".8" width="13.400" height="16.400" rx="1.500" fill="none" stroke="#e8a600" stroke-width="1.800"/><path d="M6.300 9.200L4.200 11.300l2.100 2.100M8.700 9.200l2.100 2.100-2.100 2.100" stroke="#f0b400" stroke-width="1.400" fill="none"/></svg>
<span class="t" style="top:745px;font-size:18px;line-height:24px;color:#e8eaed;left:905.5px;letter-spacing:-0.32px;">react_devtools_backend.js</span>
<span class="t" style="top:745px;font-size:18px;line-height:24px;color:#e8eaed;left:1175.5px;letter-spacing:-0.43px;transform:scaleX(0.8299);transform-origin:0 0;">GET</span>
<span class="t" style="top:745px;font-size:18px;line-height:24px;color:#e8eaed;left:1302.2px;letter-spacing:-0.61px;">200</span>
<span class="t" style="top:745px;font-size:18px;line-height:24px;color:#e8eaed;left:1386.4px;letter-spacing:0.12px;">script</span>
<span class="t" style="top:745px;font-size:18px;line-height:24px;color:#e8eaed;left:1472.3px;letter-spacing:-0.07px;text-decoration:underline;text-decoration-thickness:1px;text-underline-offset:2px;text-decoration-skip-ink:none;">injectGlobalH...</span>
<span class="t" style="top:745px;font-size:18px;line-height:24px;color:#e8eaed;left:1632.2px;letter-spacing:-0.65px;">527 kB</span>
<span class="t" style="top:745px;font-size:18px;line-height:24px;color:#e8eaed;left:1697.4px;width:19px;overflow:hidden;">1...</span>
<div class="a" style="left:881px;top:778.5px;width:15px;height:18px;border:1.700px solid #6b6d70;border-radius:1.500px;"></div>
<span class="t" style="top:776px;font-size:18px;line-height:24px;color:#e8eaed;left:905.5px;letter-spacing:0.15px;">webpack-hmr</span>
<span class="t" style="top:776px;font-size:18px;line-height:24px;color:#e8eaed;left:1175.5px;letter-spacing:-0.43px;transform:scaleX(0.8299);transform-origin:0 0;">GET</span>
<span class="t" style="top:776px;font-size:18px;line-height:24px;color:#e8eaed;left:1302.2px;letter-spacing:-0.43px;transform:scaleX(0.919);transform-origin:0 0;">101</span>
<span class="t" style="top:776px;font-size:18px;line-height:24px;color:#e8eaed;left:1386.4px;letter-spacing:-0.3px;">webso...</span>
<span class="t" style="top:776px;font-size:18px;line-height:24px;color:#e8eaed;left:1472.3px;letter-spacing:-0.41px;text-decoration:underline;text-decoration-thickness:1px;text-underline-offset:2px;text-decoration-skip-ink:none;">websocket.js?...</span>
<span class="t" style="top:776px;font-size:18px;line-height:24px;color:#e8eaed;left:1660.4px;letter-spacing:-0.43px;transform:scaleX(0.9407);transform-origin:0 0;">0 B</span>
<span class="t" style="top:776px;font-size:18px;line-height:24px;color:#9aa0a6;left:1697.4px;width:19px;overflow:hidden;">P...</span>
<div class="a" style="left:881px;top:810px;width:15px;height:18px;border:1.700px solid #6b6d70;border-radius:1.500px;"></div>
<span class="t" style="top:808px;font-size:18px;line-height:24px;color:#e8eaed;left:905.5px;letter-spacing:-0.34px;">_devPagesManifest.json</span>
<span class="t" style="top:808px;font-size:18px;line-height:24px;color:#e8eaed;left:1175.5px;letter-spacing:-0.43px;transform:scaleX(0.8299);transform-origin:0 0;">GET</span>
<span class="t" style="top:808px;font-size:18px;line-height:24px;color:#e8eaed;left:1302.2px;letter-spacing:-0.61px;">200</span>
<span class="t" style="top:808px;font-size:18px;line-height:24px;color:#e8eaed;left:1386.4px;letter-spacing:0.15px;">fetch</span>
<span class="t" style="top:808px;font-size:18px;line-height:24px;color:#e8eaed;left:1472.3px;letter-spacing:-0.06px;text-decoration:underline;text-decoration-thickness:1px;text-underline-offset:2px;text-decoration-skip-ink:none;">page-loader.js...</span>
<span class="t" style="top:808px;font-size:18px;line-height:24px;color:#e8eaed;left:1641px;letter-spacing:-0.43px;transform:scaleX(0.971);transform-origin:0 0;">267 B</span>
<span class="t" style="top:808px;font-size:18px;line-height:24px;color:#e8eaed;left:1698.4px;width:19px;overflow:hidden;">9...</span>
<div class="a" style="left:1168px;top:416px;width:1.2px;height:582px;background:#46484c;"></div>
<div class="a" style="left:1295px;top:416px;width:1.2px;height:582px;background:#46484c;"></div>
<div class="a" style="left:1379px;top:416px;width:1.2px;height:582px;background:#46484c;"></div>
<div class="a" style="left:1465px;top:416px;width:1.2px;height:582px;background:#46484c;"></div>
<div class="a" style="left:1607px;top:416px;width:1.2px;height:582px;background:#46484c;"></div>
<div class="a" style="left:1691px;top:416px;width:1.2px;height:582px;background:#46484c;"></div>
<div class="a" style="left:1719.5px;top:416px;width:1.2px;height:582px;background:#46484c;"></div>
<div class="a" style="left:1720.7px;top:416px;width:1px;height:582px;background:#33363a;"></div>
<div class="a" style="left:1882px;top:457px;width:1px;height:541px;background:#3a3a3a;"></div>
<div class="a" style="left:1726.7px;top:469.5px;width:3px;height:8px;background:#c8c8c8;"></div>
<div class="a" style="left:1733.8px;top:463px;width:131.2px;height:20px;background:#00a846;"></div>
<div class="a" style="left:1865px;top:465px;width:3.3px;height:16.5px;background:#03a9f4;"></div>
<div class="a" style="left:1857.2px;top:500px;width:4.8px;height:11px;background:#d8d8d8;"></div>
<div class="a" style="left:1863.2px;top:497.5px;width:3.6px;height:16.5px;background:#03a9f4;"></div>
<div class="a" style="left:1858.9px;top:532px;width:3.1px;height:11px;background:#d8d8d8;"></div>
<div class="a" style="left:1866.5px;top:528px;width:9px;height:19px;background:#0c9ae3;"></div>
<div class="a" style="left:1858.9px;top:564px;width:3.1px;height:11px;background:#d8d8d8;"></div>
<div class="a" style="left:1866.5px;top:561.5px;width:3.4px;height:16.5px;background:#03a9f4;"></div>
<div class="a" style="left:1858.9px;top:596px;width:4.6px;height:11px;background:#d8d8d8;"></div>
<div class="a" style="left:1864.5px;top:591.5px;width:20.3px;height:20px;background:#0c9ae3;"></div>
<div class="a" style="left:1858.9px;top:628px;width:4.6px;height:11px;background:#d8d8d8;"></div>
<div class="a" style="left:1864.2px;top:624px;width:1.2px;height:19px;background:#00a846;"></div>
<div class="a" style="left:1865.4px;top:624px;width:14.6px;height:19px;background:#0c9ae3;"></div>
<div class="a" style="left:1858.6px;top:660px;width:5.1px;height:11px;background:#d8d8d8;"></div>
<div class="a" style="left:1867.9px;top:657.5px;width:3.4px;height:16.5px;background:#03a9f4;"></div>
<div class="a" style="left:1858.6px;top:692px;width:5.1px;height:11px;background:#d8d8d8;"></div>
<div class="a" style="left:1867.9px;top:689.5px;width:3.4px;height:16.5px;background:#03a9f4;"></div>
<div class="a" style="left:1858.6px;top:724px;width:5.1px;height:11px;background:#d8d8d8;"></div>
<div class="a" style="left:1867.9px;top:721.5px;width:3.4px;height:16.5px;background:#03a9f4;"></div>
<div class="a" style="left:1861.7px;top:753.5px;width:3.4px;height:16.5px;background:#03a9f4;"></div>
<div class="a" style="left:1874px;top:786.8px;width:26.2px;height:10.7px;background:#8c8c8c;"></div>
<div class="a" style="left:1898.8px;top:820px;width:2.9px;height:7.8px;background:#7d5a5a;"></div>
<div class="a" style="left:1896px;top:457px;width:1.5px;height:541px;background:#1a6fd6;"></div>
<div class="a" style="left:1900px;top:457px;width:2px;height:541px;background:#9b1c1c;"></div>
<div class="a" style="left:1902px;top:457px;width:18px;height:541px;background:#424242;"></div>
<div class="a" style="left:1904px;top:474px;width:13px;height:471px;background:#6b6b6b;"></div>
<svg class="a" style="left:1907px;top:463.500px" width="8" height="5" viewBox="0 0 8 5"><path d="M4 0l4 5H0z" fill="#a0a0a0"/></svg>
<svg class="a" style="left:1907px;top:985.500px" width="8" height="5" viewBox="0 0 8 5"><path d="M4 5l4-5H0z" fill="#fff"/></svg>
<div class="a" style="left:868px;top:998px;width:1052px;height:1px;background:#494c50;"></div>
<div class="a" style="left:868px;top:999px;width:1052px;height:41px;background:#292a2d;"></div>
<span class="t" style="top:1008px;font-size:18px;line-height:24px;color:#9aa0a6;left:882.7px;letter-spacing:-0.19px;">12 requests</span>
<span class="t" style="top:1008px;font-size:18px;line-height:24px;color:#9aa0a6;left:1003.6px;letter-spacing:-0.1px;">8.3 MB transferred</span>
<span class="t" style="top:1008px;font-size:18px;line-height:24px;color:#9aa0a6;left:1179.2px;letter-spacing:-0.4px;">39.3 MB resources</span>
<span class="t" style="top:1008px;font-size:18px;line-height:24px;color:#9aa0a6;left:1351.5px;letter-spacing:-0.48px;">Finish: 22.59 s</span>
<span class="t" style="top:1008px;font-size:18px;line-height:24px;color:#e8925a;left:1489.6px;letter-spacing:-0.17px;">DOMContentLoaded: 21.90 s</span>
<span class="t" style="top:1008px;font-size:18px;line-height:24px;color:#35c4b5;left:1746.9px;letter-spacing:-0.45px;">Load: 22.53 s</span>
<div class="a" style="left:989px;top:1007px;width:1px;height:24px;background:#54575b;"></div>
<div class="a" style="left:1164.5px;top:1007px;width:1px;height:24px;background:#54575b;"></div>
<div class="a" style="left:1338.5px;top:1007px;width:1px;height:24px;background:#54575b;"></div>
<div class="a" style="left:1476px;top:1007px;width:1px;height:24px;background:#54575b;"></div>
<div class="a" style="left:1734.5px;top:1007px;width:1px;height:24px;background:#54575b;"></div>
<div class="a" style="left:866px;top:1039px;width:1054px;height:1px;background:#3c3d41;"></div>
<div class="a" style="left:1919px;top:103px;width:1px;height:937px;background:#3a3b3f;"></div>
</aside>
</body>
</html>
